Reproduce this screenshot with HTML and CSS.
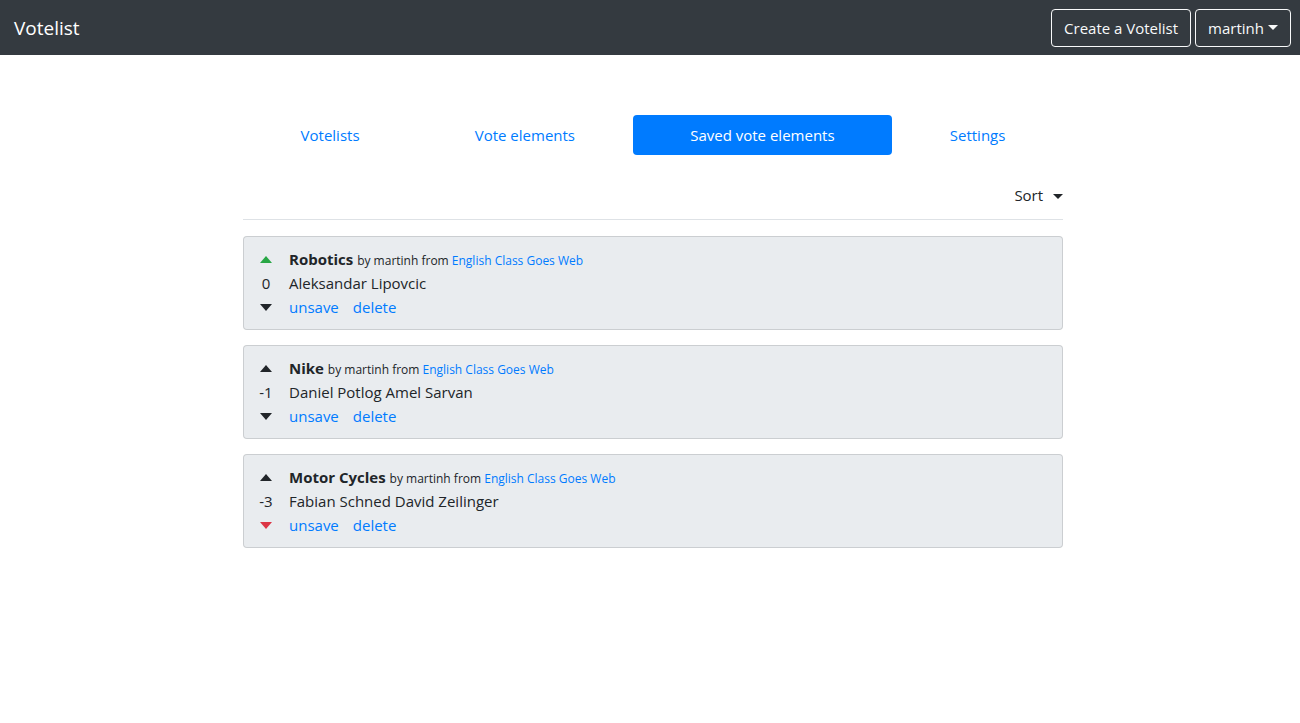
FILE: index.html
```html
<!DOCTYPE html>
<html lang="en">
<head>
<meta charset="utf-8">
<title>Votelist</title>
<link rel="stylesheet" href="styles.css">
</head>
<body>
<header class="navbar">
  <a class="brand" href="#">Votelist</a>
  <div class="nav-actions">
    <a class="btn-outline" href="#">Create a Votelist</a>
    <a class="btn-outline" href="#">martinh <span class="caret"></span></a>
  </div>
</header>
<main class="container">
  <nav class="pills">
    <a class="pill" href="#">Votelists</a>
    <a class="pill" href="#">Vote elements</a>
    <a class="pill active" href="#">Saved vote elements</a>
    <a class="pill" href="#">Settings</a>
  </nav>
  <div class="sort-row">
    <span class="sort">Sort <span class="caret dark"></span></span>
  </div>
  <div class="list">
    <div class="card">
      <div class="vote">
        <span class="tri up green"></span>
        <span class="score">0</span>
        <span class="tri down"></span>
      </div>
      <div class="body">
        <div class="title-line"><b class="title">Robotics</b> <small>by martinh from <a href="#">English Class Goes Web</a></small></div>
        <div class="line">Aleksandar Lipovcic</div>
        <div class="line actions"><a href="#">unsave</a><a href="#">delete</a></div>
      </div>
    </div>
    <div class="card">
      <div class="vote">
        <span class="tri up"></span>
        <span class="score">-1</span>
        <span class="tri down"></span>
      </div>
      <div class="body">
        <div class="title-line"><b class="title">Nike</b> <small>by martinh from <a href="#">English Class Goes Web</a></small></div>
        <div class="line">Daniel Potlog Amel Sarvan</div>
        <div class="line actions"><a href="#">unsave</a><a href="#">delete</a></div>
      </div>
    </div>
    <div class="card">
      <div class="vote">
        <span class="tri up"></span>
        <span class="score">-3</span>
        <span class="tri down red"></span>
      </div>
      <div class="body">
        <div class="title-line"><b class="title">Motor Cycles</b> <small>by martinh from <a href="#">English Class Goes Web</a></small></div>
        <div class="line">Fabian Schned David Zeilinger</div>
        <div class="line actions"><a href="#">unsave</a><a href="#">delete</a></div>
      </div>
    </div>
  </div>
</main>
</body>
</html>
```
FILE: styles.css
```css
* { box-sizing: border-box; }
html, body { margin: 0; padding: 0; }
body {
  font-family: "Open Sans", "Noto Sans", sans-serif;
  font-size: 15px;
  line-height: 24px;
  color: #212529;
  background: #fff;
}
a { color: #007bff; text-decoration: none; }

.navbar {
  height: 55px;
  background: #343a40;
  display: flex;
  align-items: center;
  justify-content: space-between;
  padding: 0 9px 0 14px;
}
.brand {
  color: #fff;
  font-size: 19px;
  line-height: 30px;
}
.nav-actions { display: flex; gap: 4px; }
.btn-outline {
  display: inline-flex;
  align-items: center;
  height: 38px;
  padding: 0 12px;
  border: 1px solid #f8f9fa;
  border-radius: 4px;
  color: #f8f9fa;
  font-size: 15px;
}
.caret {
  display: inline-block;
  margin-left: 4px;
  width: 0; height: 0;
  border-left: 5px solid transparent;
  border-right: 5px solid transparent;
  border-top: 5px solid #f8f9fa;
  vertical-align: middle;
}
.caret.dark { border-top-color: #212529; margin-left: 6px; }

.container {
  width: 820px;
  margin-left: calc(50% - 407px);
  padding-top: 60px;
}
.pills { display: flex; }
.pill {
  flex: 1 1 auto;
  text-align: center;
  padding: 8px 16px;
  border-radius: 4px;
  line-height: 24px;
  color: #007bff;
}
.pill.active { background: #007bff; color: #fff; }

.sort-row {
  display: flex;
  justify-content: flex-end;
  padding: 28px 0 12px;
  border-bottom: 1px solid #dee2e6;
}
.sort { line-height: 24px; }

.list {
  display: flex;
  flex-direction: column;
  gap: 15px;
  padding-top: 16px;
}
.card {
  display: flex;
  gap: 13px;
  background: #e9ecef;
  border: 1px solid rgba(0,0,0,0.125);
  border-radius: 4px;
  padding: 10px 12px 10px;
}
.vote {
  width: 20px;
  display: flex;
  flex-direction: column;
  align-items: center;
}
.vote > * { height: 24px; display: flex; align-items: center; justify-content: center; }
.tri { width: 20px; }
.tri::after {
  content: "";
  width: 0; height: 0;
  border-left: 6px solid transparent;
  border-right: 6px solid transparent;
}
.tri.up::after { border-bottom: 7px solid #212529; }
.tri.down::after { border-top: 7px solid #212529; }
.tri.up.green::after { border-bottom-color: #28a745; }
.tri.down.red::after { border-top-color: #dc3545; }
.body { display: flex; flex-direction: column; }
.title-line, .line { line-height: 24px; height: 24px; }
.title { font-weight: 700; }
small { font-size: 12px; }
.actions { display: flex; gap: 14px; }
```
